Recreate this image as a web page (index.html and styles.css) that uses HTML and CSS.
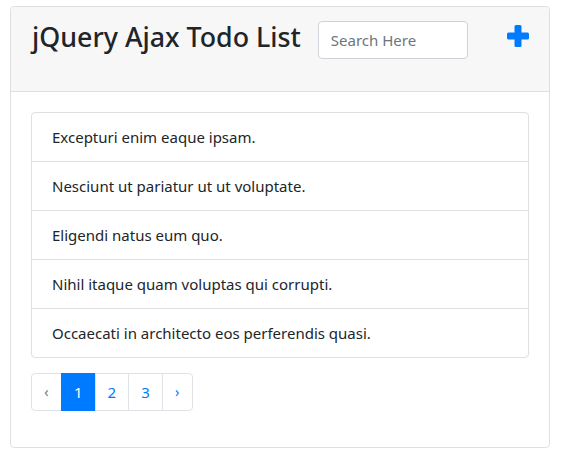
FILE: index.html
```html
<!DOCTYPE html>
<html>
<head>
<meta charset="utf-8">
<link rel="stylesheet" href="styles.css">
</head>
<body>
<div class="card">
  <div class="card-header">
    <div class="header-left">
      <h3 class="title">jQuery Ajax Todo List</h3>
      <input class="search" type="text" placeholder="Search Here">
    </div>
    <a class="add" href="#">
      <svg width="22" height="22" viewBox="0 0 22 22"><rect x="7.5" y="0" width="7" height="22" rx="1.5" fill="#007bff"/><rect x="0" y="7.5" width="22" height="7" rx="1.5" fill="#007bff"/></svg>
    </a>
  </div>
  <div class="card-body">
    <ul class="list-group">
      <li class="list-item">Excepturi enim eaque ipsam.</li>
      <li class="list-item">Nesciunt ut pariatur ut ut voluptate.</li>
      <li class="list-item">Eligendi natus eum quo.</li>
      <li class="list-item">Nihil itaque quam voluptas qui corrupti.</li>
      <li class="list-item">Occaecati in architecto eos perferendis quasi.</li>
    </ul>
    <ul class="pagination">
      <li class="page-link small">&lsaquo;</li>
      <li class="page-link active">1</li>
      <li class="page-link">2</li>
      <li class="page-link">3</li>
      <li class="page-link small">&rsaquo;</li>
    </ul>
  </div>
</div>
</body>
</html>
```
FILE: styles.css
```css
* { box-sizing: border-box; }
body {
  margin: 0;
  padding: 6px 0 0 10px;
  font-family: "Noto Sans", sans-serif;
  font-size: 15px;
  line-height: 24px;
  color: #212529;
  background: #fff;
}
.card {
  width: 540px;
  border: 1px solid #dfdfdf;
  border-radius: 4px;
  background: #fff;
}
.card-header {
  background: #f7f7f7;
  border-bottom: 1px solid #dfdfdf;
  padding: 14px 20px 32px;
  display: flex;
  justify-content: space-between;
  align-items: center;
  border-radius: 4px 4px 0 0;
}
.header-left {
  display: flex;
  align-items: center;
  gap: 17px;
}
.title {
  margin: 0 0 0 1px;
  font-size: 26.8px;
  font-weight: 500;
  line-height: 1.2;
  position: relative;
  top: -3px;
}
.search {
  width: 150px;
  height: 38px;
  padding: 6px 12px;
  font-family: inherit;
  font-size: 15px;
  color: #495057;
  border: 1px solid #ced4da;
  border-radius: 4px;
  background: #fff;
  outline: none;
}
.search::placeholder { color: #6c757d; }
.add {
  display: flex;
  position: relative;
  top: -4px;
}
.card-body {
  padding: 20px;
}
.list-group {
  list-style: none;
  margin: 0 0 15px;
  padding: 0;
  border: 1px solid #dfdfdf;
  border-radius: 4px;
}
.list-item {
  padding: 12px 20px;
  border-top: 1px solid #dfdfdf;
}
.list-item:first-child { border-top: none; }
.pagination {
  display: flex;
  list-style: none;
  margin: 0 0 16px;
  padding: 0;
}
.page-link {
  padding: 8px 12px;
  line-height: 20px;
  color: #007bff;
  border: 1px solid #dee2e6;
  margin-left: -1px;
  background: #fff;
}
.page-link:first-child { margin-left: 0; border-radius: 4px 0 0 4px; }
.page-link:last-child { border-radius: 0 4px 4px 0; }
.page-link.small {
  font-size: 14px;
  width: 31px;
  padding: 8px 0;
  text-align: center;
}
.page-link.small:first-child { color: #6c757d; }
.page-link.active {
  background: #007bff;
  border-color: #007bff;
  color: #fff;
}
```
